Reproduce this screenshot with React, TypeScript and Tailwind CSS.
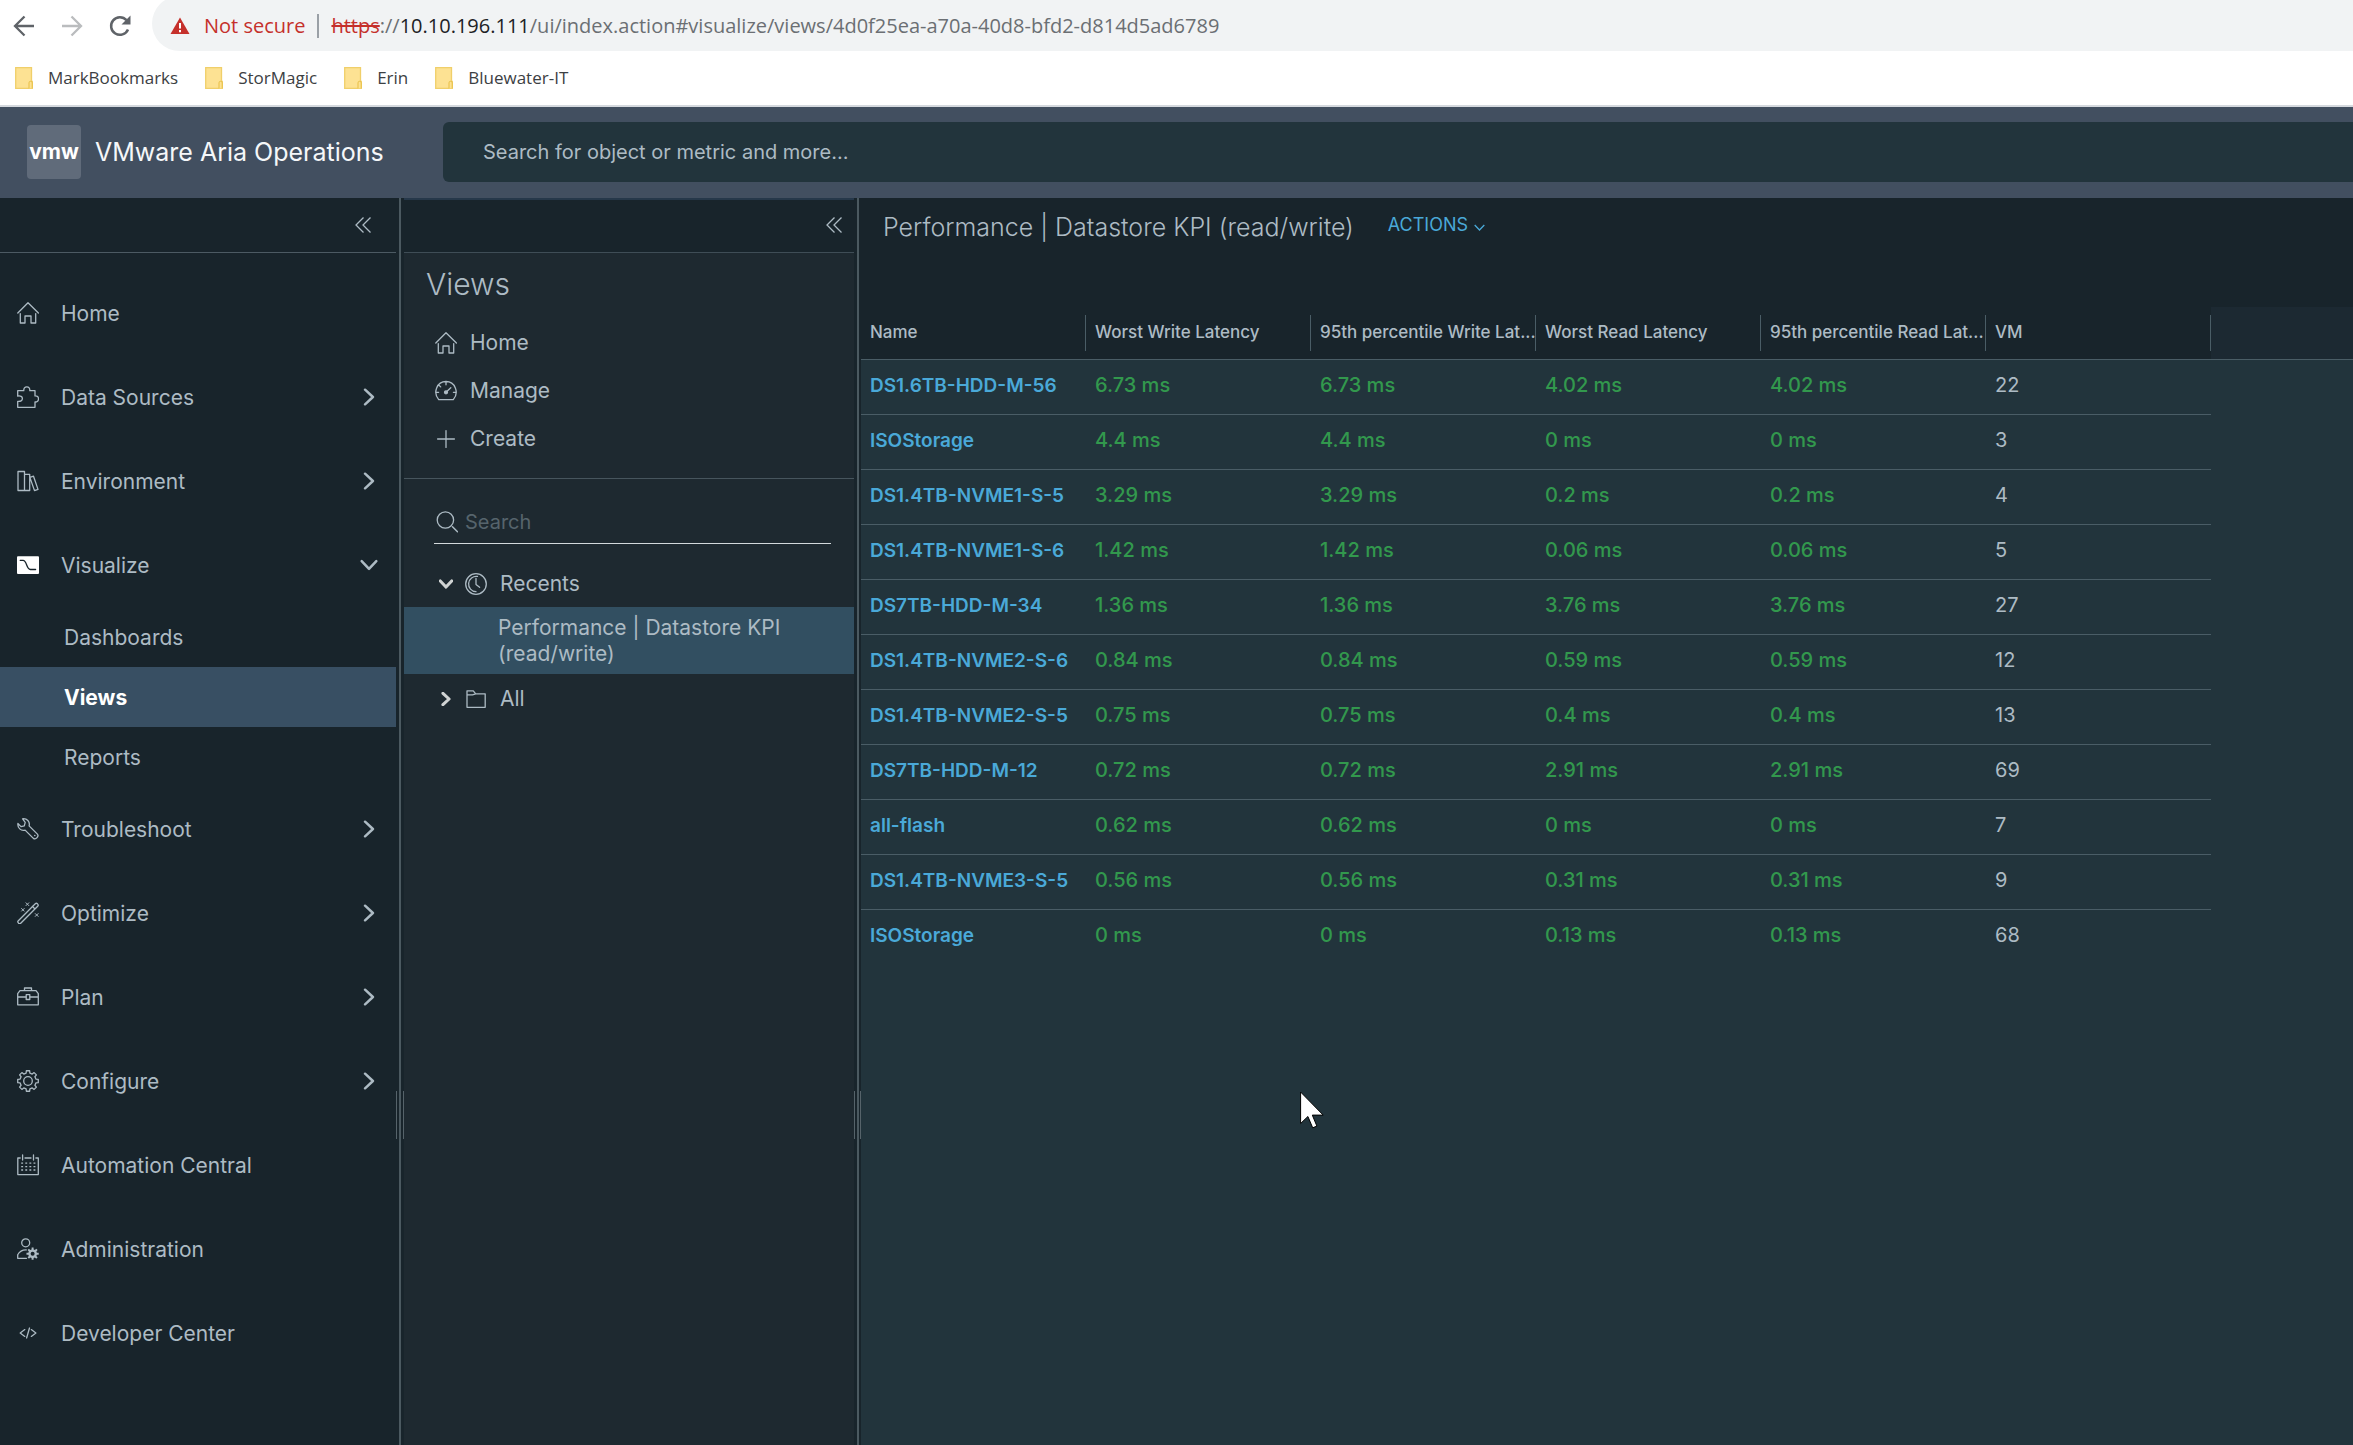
import React from "react";
import { clsx } from "clsx";

interface IconProps {
  className?: string;
}

// Outline of a cog with soft teeth, as an svg path
const gearPath = (cx: number, cy: number, outer: number, inner: number, teeth = 8) => {
  const step = (Math.PI * 2) / teeth;
  const points: string[] = [];
  for (let i = 0; i < teeth; i++) {
    const a = i * step - Math.PI / 2;
    [
      [inner, -0.3],
      [outer, -0.2],
      [outer, 0.2],
      [inner, 0.3],
    ].forEach(([r, t]) => {
      points.push(`${(cx + r * Math.cos(a + t * step)).toFixed(2)} ${(cy + r * Math.sin(a + t * step)).toFixed(2)}`);
    });
  }
  return `M${points.join("L")}Z`;
};

const Svg: React.FC<IconProps & { children: React.ReactNode }> = ({ className, children }) => (
  <svg
    viewBox="0 0 22 22"
    fill="none"
    stroke="currentColor"
    strokeWidth={1.3}
    strokeLinecap="round"
    strokeLinejoin="round"
    aria-hidden="true"
    className={clsx("size-[22px] shrink-0", className)}
  >
    {children}
  </svg>
);

const HomeIcon = () => (
  <Svg>
    <path d="M.8 11 11 .8 21.4 11M3.3 11.6V21H8v-7h6v7h4.7v-9.4" />
  </Svg>
);

const PuzzleIcon = () => (
  <Svg>
    <path d="M.7 4.7H6.8C6.6 2.2 7.8.8 9.8.8s3.2 1.4 3 3.9H18v5.2c2.2-.2 3.5 1 3.5 3s-1.3 3.2-3.5 3.1v5.3H.7v-6C3.6 15.6 5.4 14.6 5.4 12.6S3.6 9.6.7 10.1Z" />
  </Svg>
);

const LibraryIcon = () => (
  <Svg>
    <path d="M1 1.5h6.5v19H1zM7.5 4.3H12.7v16.2H7.5M13 7.4l3.5-1.2 4.5 13.2-3.5 1.2-4.7-13.5" />
  </Svg>
);

const VisualizeIcon = () => (
  <Svg>
    <rect x="0" y="2.3" width="22" height="17.6" rx="1" fill="#fff" stroke="none" />
    <path d="M3.2 6.3H6c4.2 0 3 9.2 7.4 9.2h5.2" stroke="#18242b" />
  </Svg>
);

const WrenchIcon = () => (
  <Svg>
    <path d="M5.6.8c4.2-.6 7.7 2.9 6.5 7.1l8.3 8.2c1.8 2-1.4 6-4 4.3l-8.3-8.3C3.9 13.3.4 9.9.9 5.5L4 8.6l3.3-.8.9-3.4Z" />
    <circle cx="17.8" cy="17.5" r=".8" fill="currentColor" stroke="none" />
  </Svg>
);

const WandIcon = () => (
  <Svg>
    <rect x="-2.5" y="9.8" width="27" height="3.4" rx="1.5" transform="rotate(-45 11 11.5)" />
    <path d="m15.5 4.5 2 2" />
    <path d="m9 .8 2.8 2.8m0-2.8L9 3.6M4.6 6.5l2.6 2.6m0-2.6L4.6 9.1M18.3 11.6l2.8 2.8m0-2.8-2.8 2.8" strokeWidth="1" />
  </Svg>
);

const BriefcaseIcon = () => (
  <Svg>
    <path d="M3 4.6h16l2.3 3v11.2H.7V7.6ZM7.5 4.6V2h7v2.6M.7 11h8.2m4.2 0h8.2" />
    <rect x="9.2" y="8.7" width="3.6" height="4.8" />
  </Svg>
);

const GearIcon = () => (
  <Svg>
    <path d={gearPath(11, 11, 10.4, 8.1)} />
    <circle cx="11" cy="11" r="4.3" />
  </Svg>
);

const CalendarIcon = () => (
  <Svg>
    <path d="M3.2 4H.8v16.6h20.5V4h-2.4M8 4h6M5.6 1v5M16.5 1v5" />
    <path d="M4.2 9.2h14.5M4.2 12.6h14.5M4.2 16h14.5" strokeDasharray="1.9 2.2" strokeLinecap="butt" />
  </Svg>
);

const AdminIcon = () => (
  <Svg>
    <circle cx="8.7" cy="4.8" r="4" />
    <path d="M9.5 20.3H.7v-3.5c1.7-3.2 4.7-5 8.6-4.9" />
    <path d={gearPath(15.6, 15.7, 6.2, 4.4)} fill="currentColor" stroke="none" />
    <circle cx="15.6" cy="15.7" r="2" fill="#18242b" stroke="none" />
  </Svg>
);

const CodeIcon = () => (
  <Svg>
    <path d="M7.8 7.6 3.2 11l4.6 3.4M14.3 7.6 18.9 11l-4.6 3.4M12.5 6 9.6 16" />
  </Svg>
);

const GaugeIcon = () => (
  <Svg>
    <path d="M3.7 19.6h14.6C24.5 12.5 20 1.5 11 1.5S-2.5 12.5 3.7 19.6ZM11 1.8v3M1 12.3h2.6M18.4 12.3H21M4 5.3l1.7 1.6M11 12.3l4.8-4.5" />
    <circle cx="11" cy="12.3" r="1.5" fill="currentColor" />
  </Svg>
);

const PlusIcon = () => (
  <Svg>
    <path d="M11 2.6v16.8M2.6 11h16.8" />
  </Svg>
);

const SearchIcon = () => (
  <Svg>
    <circle cx="9.4" cy="9" r="8.2" />
    <path d="m16.5 15.8 5 5" strokeWidth="1.5" />
  </Svg>
);

const ClockIcon = () => (
  <Svg>
    <circle cx="11" cy="11" r="10.3" />
    <path d="M11 5.5v6l3.6 2.8M12.5 3.4A7.7 7.7 0 1 0 11 18.7" />
  </Svg>
);

const FolderIcon = () => (
  <Svg>
    <path d="M2 19.3V2.8h6.3l2.4 3h9.5v13.5ZM2 6.8h5.5l3.2-1" />
  </Svg>
);

const CollapseIcon = () => (
  <svg viewBox="0 0 16 16" className="size-4" fill="none" stroke="currentColor" strokeWidth="1.3" aria-hidden="true">
    <path d="M8.5.5 1 8l7.5 7.5M15.5.5 8 8l7.5 7.5" />
  </svg>
);

const Caret: React.FC<{ open?: boolean; className?: string }> = ({ open, className }) => (
  <svg
    viewBox="0 0 16 16"
    className={clsx("shrink-0", open && "rotate-90", className)}
    fill="none"
    stroke="currentColor"
    strokeLinecap="round"
    strokeLinejoin="round"
    aria-hidden="true"
  >
    <path d="m4.5 1.5 7 6.5-7 6.5" />
  </svg>
);

const bookmarks = ["MarkBookmarks", "StorMagic", "Erin", "Bluewater-IT"];

interface NavItem {
  label: string;
  icon: React.FC;
  expandable?: boolean;
  children?: string[];
}

const navItems: NavItem[] = [
  { label: "Home", icon: HomeIcon },
  { label: "Data Sources", icon: PuzzleIcon, expandable: true },
  { label: "Environment", icon: LibraryIcon, expandable: true },
  { label: "Visualize", icon: VisualizeIcon, expandable: true, children: ["Dashboards", "Views", "Reports"] },
  { label: "Troubleshoot", icon: WrenchIcon, expandable: true },
  { label: "Optimize", icon: WandIcon, expandable: true },
  { label: "Plan", icon: BriefcaseIcon, expandable: true },
  { label: "Configure", icon: GearIcon, expandable: true },
  { label: "Automation Central", icon: CalendarIcon },
  { label: "Administration", icon: AdminIcon },
  { label: "Developer Center", icon: CodeIcon },
];

const viewLinks = [
  { label: "Home", icon: HomeIcon },
  { label: "Manage", icon: GaugeIcon },
  { label: "Create", icon: PlusIcon },
];

const columns = [
  "Name",
  "Worst Write Latency",
  "95th percentile Write Lat...",
  "Worst Read Latency",
  "95th percentile Read Lat...",
  "VM",
];

const rows = [
  ["DS1.6TB-HDD-M-56", "6.73 ms", "6.73 ms", "4.02 ms", "4.02 ms", "22"],
  ["ISOStorage", "4.4 ms", "4.4 ms", "0 ms", "0 ms", "3"],
  ["DS1.4TB-NVME1-S-5", "3.29 ms", "3.29 ms", "0.2 ms", "0.2 ms", "4"],
  ["DS1.4TB-NVME1-S-6", "1.42 ms", "1.42 ms", "0.06 ms", "0.06 ms", "5"],
  ["DS7TB-HDD-M-34", "1.36 ms", "1.36 ms", "3.76 ms", "3.76 ms", "27"],
  ["DS1.4TB-NVME2-S-6", "0.84 ms", "0.84 ms", "0.59 ms", "0.59 ms", "12"],
  ["DS1.4TB-NVME2-S-5", "0.75 ms", "0.75 ms", "0.4 ms", "0.4 ms", "13"],
  ["DS7TB-HDD-M-12", "0.72 ms", "0.72 ms", "2.91 ms", "2.91 ms", "69"],
  ["all-flash", "0.62 ms", "0.62 ms", "0 ms", "0 ms", "7"],
  ["DS1.4TB-NVME3-S-5", "0.56 ms", "0.56 ms", "0.31 ms", "0.31 ms", "9"],
  ["ISOStorage", "0 ms", "0 ms", "0.13 ms", "0.13 ms", "68"],
];

const BrowserBar = () => (
  <div className="bg-white font-['Open_Sans',sans-serif]">
    <div className="flex h-[51px] items-center overflow-hidden pl-3">
      <button aria-label="Back" className="mr-6 text-[#5f6368]">
        <svg viewBox="0 0 24 24" className="size-6" fill="none" stroke="currentColor" strokeWidth="2.3">
          <path d="M22 12H3.5M12.5 2.5 3 12l9.5 9.5" />
        </svg>
      </button>
      <button aria-label="Forward" className="mr-6 text-[#babcbe]">
        <svg viewBox="0 0 24 24" className="size-6" fill="none" stroke="currentColor" strokeWidth="2.3">
          <path d="M2 12h18.5M11.5 2.5 21 12l-9.5 9.5" />
        </svg>
      </button>
      <button aria-label="Reload" className="mr-5 text-[#5f6368]">
        <svg viewBox="0 0 24 24" className="size-6" fill="none" stroke="currentColor" strokeWidth="2.5">
          <path d="M20 15.5A8.8 8.8 0 1 1 18.5 6.2" />
          <path d="M22.5 1.5v9h-9Z" fill="currentColor" stroke="none" />
        </svg>
      </button>
      <div className="-mt-1 flex h-[55px] flex-1 items-center rounded-l-full bg-[#f1f3f4] pt-1 pl-[18px] text-[20px] leading-7">
        <svg viewBox="0 0 20 18" className="mr-3.5 h-[18px] w-5" aria-hidden="true">
          <path d="M10 .5 19.5 17H.5Z" fill="#c5302b" />
          <path d="M10 6v5.5M10 13v2.2" stroke="#fff" strokeWidth="2" />
        </svg>
        <span className="text-[#c5302b]">Not secure</span>
        <span className="mx-3 h-6 w-0.5 bg-[#9aa0a6]" />
        <span className="whitespace-nowrap text-[#6b6f73]">
          <span className="text-[#c5302b] line-through">https</span>://
          <span className="text-[#202124]">10.10.196.111</span>
          /ui/index.action#visualize/views/4d0f25ea-a70a-40d8-bfd2-d814d5ad6789
        </span>
      </div>
    </div>
    <div className="flex h-[54px] items-center gap-[27px] pl-[15px]">
      {bookmarks.map((name) => (
        <a key={name} href="#" className="flex items-center gap-[15px] text-[17px] text-[#3c4043]">
          <svg viewBox="0 0 18 22" className="h-[22px] w-[18px]" aria-hidden="true">
            <path d="M.7.7h15.8v13.6h.8v7H.7Z" fill="#fde293" stroke="#f0cf6a" strokeWidth="1.3" />
            <path d="M14 21.3v-5.5q0-1.5 1.6-1.5t1.6 1.5v5.5" fill="#fde293" stroke="#e8bf45" />
          </svg>
          {name}
        </a>
      ))}
    </div>
  </div>
);

const Header = () => (
  <header className="flex h-[93px] shrink-0 items-center border-t-2 border-[#d5d9de] bg-[#424f60] pb-0.5 pl-[27px]">
    <div className="flex size-[54px] items-center justify-center rounded bg-[#606b7a] text-[21px] leading-none font-bold text-white">
      vmw
    </div>
    <h1 className="w-[362px] pt-0.5 pl-3.5 text-[25px] text-[#f5f7f9]">VMware Aria Operations</h1>
    <input
      type="text"
      aria-label="Search for object or metric"
      placeholder="Search for object or metric and more..."
      className="h-[60px] min-w-0 flex-1 rounded-l-md bg-[#22343c] px-10 text-[20px] text-white outline-none placeholder:text-[#adbbc4]"
    />
  </header>
);

const SideNav = () => (
  <nav className="w-[396px] shrink-0 text-[21px]">
    <div className="flex h-[55px] items-center justify-end border-b border-[#4c5a63] pr-[25px]">
      <button aria-label="Collapse navigation">
        <CollapseIcon />
      </button>
    </div>
    <ul className="pt-[18px]">
      {navItems.map((item) => (
        <li key={item.label}>
          <button className="flex h-[84px] w-full items-center pr-[18px] pl-[17px] text-left">
            <item.icon />
            <span className="flex-1 pt-px pl-[22px]">{item.label}</span>
            {item.expandable && <Caret open={!!item.children} className="size-[18px] stroke-[2.2]" />}
          </button>
          {item.children?.map((child) => (
            <a
              key={child}
              href="#"
              className={clsx(
                "flex h-[60px] items-center pt-0.5 pl-16",
                child === "Views" && "bg-[#384f63] font-bold text-white"
              )}
            >
              {child}
            </a>
          ))}
        </li>
      ))}
    </ul>
  </nav>
);

const Splitter: React.FC<IconProps> = ({ className }) => (
  <div className={clsx("relative flex shrink-0 justify-center", className)}>
    <div className="w-0.5 bg-[#4b5960]" />
    <div className="absolute inset-x-0 top-[893px] h-12 border-x border-[#56636a]" />
  </div>
);

const ViewsPanel = () => (
  <aside className="w-[450px] shrink-0 bg-[#1e2930] text-[21px]">
    <div className="flex h-[55px] items-center justify-end border-t-2 border-b border-t-[#26384a] border-b-[#3f4d56] bg-[#18242b] pr-3 pb-0.5">
      <button aria-label="Collapse views">
        <CollapseIcon />
      </button>
    </div>
    <div className="border-b border-[#47555d] pb-[15px]">
      <h2 className="px-[22px] pt-2.5 pb-3.5 text-[30px] leading-[42px] font-light">Views</h2>
      {viewLinks.map((link) => (
        <a key={link.label} href="#" className="flex h-12 items-center gap-[13px] pl-[31px]">
          <link.icon />
          {link.label}
        </a>
      ))}
    </div>
    <label className="mr-[23px] ml-[30px] mt-6 flex h-[41px] items-center gap-[7px] border-b border-[#d3d9dc] pb-0.5 pl-0.5">
      <SearchIcon />
      <input
        type="search"
        aria-label="Search views"
        placeholder="Search"
        className="min-w-0 flex-1 bg-transparent text-[20px] outline-none placeholder:text-[#56646c]"
      />
    </label>
    <ul className="pt-[17px]">
      <li>
        <button className="flex h-[46px] w-full items-center pl-[35px] text-left">
          <Caret open className="size-3.5 stroke-[3.5] text-[#d0d3d3]" />
          <span className="flex items-center gap-[13px] pl-3">
            <ClockIcon />
            Recents
          </span>
        </button>
        <a href="#" className="block bg-[#324f61] pt-2 pr-14 pb-[7px] pl-[94px] leading-[26px]">
          Performance | Datastore KPI (read/write)
        </a>
      </li>
      <li>
        <button className="flex h-[50px] w-full items-center pl-[35px] text-left">
          <Caret className="size-3.5 stroke-[3.5] text-[#d0d3d3]" />
          <span className="flex items-center gap-[13px] pl-3">
            <FolderIcon />
            All
          </span>
        </button>
      </li>
    </ul>
  </aside>
);

const DatastoreTable = () => (
  <table className="w-full table-fixed border-collapse text-left text-[20px]">
    <colgroup>
      {columns.map((name) => (
        <col key={name} className="w-[225px]" />
      ))}
      <col />
    </colgroup>
    <thead>
      <tr className="h-[52px] border-b border-[#4a5d66] bg-[#18242b]">
        {columns.map((name) => (
          <th key={name} className="p-0 text-[17px] font-medium">
            <div className="flex h-9 items-center border-r border-[#4a5d66] pl-[9px] whitespace-nowrap">{name}</div>
          </th>
        ))}
        <td className="bg-[#1c2932]" />
      </tr>
    </thead>
    <tbody>
      {rows.map((row, i) => (
        <tr key={i} className="h-[55px]">
          {row.map((cell, j) => (
            <td
              key={j}
              className={clsx(
                "p-0 pb-[3px] pl-[9px] leading-7 whitespace-nowrap",
                i < rows.length - 1 && "border-b border-[#4a5d66]",
                j > 0 && j < 5 && "font-medium text-[#32984d]"
              )}
            >
              {j === 0 ? (
                <a href="#" className="text-[19px] font-semibold text-[#4aa9d8]">
                  {cell}
                </a>
              ) : (
                cell
              )}
            </td>
          ))}
          <td />
        </tr>
      ))}
    </tbody>
  </table>
);

const App = () => {
  return (
    <div className="relative flex min-h-screen flex-col overflow-hidden bg-[#18242b] font-['Inter',sans-serif] text-[#adbbc4]">
      <BrowserBar />
      <Header />
      <div className="flex flex-1">
        <SideNav />
        <Splitter className="w-2" />
        <ViewsPanel />
        <Splitter className="w-[7px]" />
        <main className="flex min-w-0 flex-1 flex-col bg-[#22343c]">
          <div className="flex h-[109px] items-start bg-[#18242b] pt-[11px] pl-[22px]">
            <h2 className="text-[25px] leading-9 font-light">Performance | Datastore KPI (read/write)</h2>
            <button className="ml-[34px] flex items-center gap-1.5 text-[18px] leading-8 text-[#4aa9d8]">
              ACTIONS
              <svg viewBox="0 0 11 11" className="mt-1 size-[11px]" fill="none" stroke="currentColor" aria-hidden="true">
                <path d="m.7 3 4.8 5 4.8-5" strokeWidth="1.3" />
              </svg>
            </button>
          </div>
          <DatastoreTable />
        </main>
      </div>
      {/* mouse pointer */}
      <svg viewBox="0 0 24 38" className="absolute top-[1091px] left-[1300px] h-[38px] w-6" aria-hidden="true">
        <path d="M.6 1v31.5l7.3-7 4.8 11.3 4.2-1.7-4.6-11h10.9Z" fill="#fff" stroke="#000" />
      </svg>
    </div>
  );
};

export default App;
